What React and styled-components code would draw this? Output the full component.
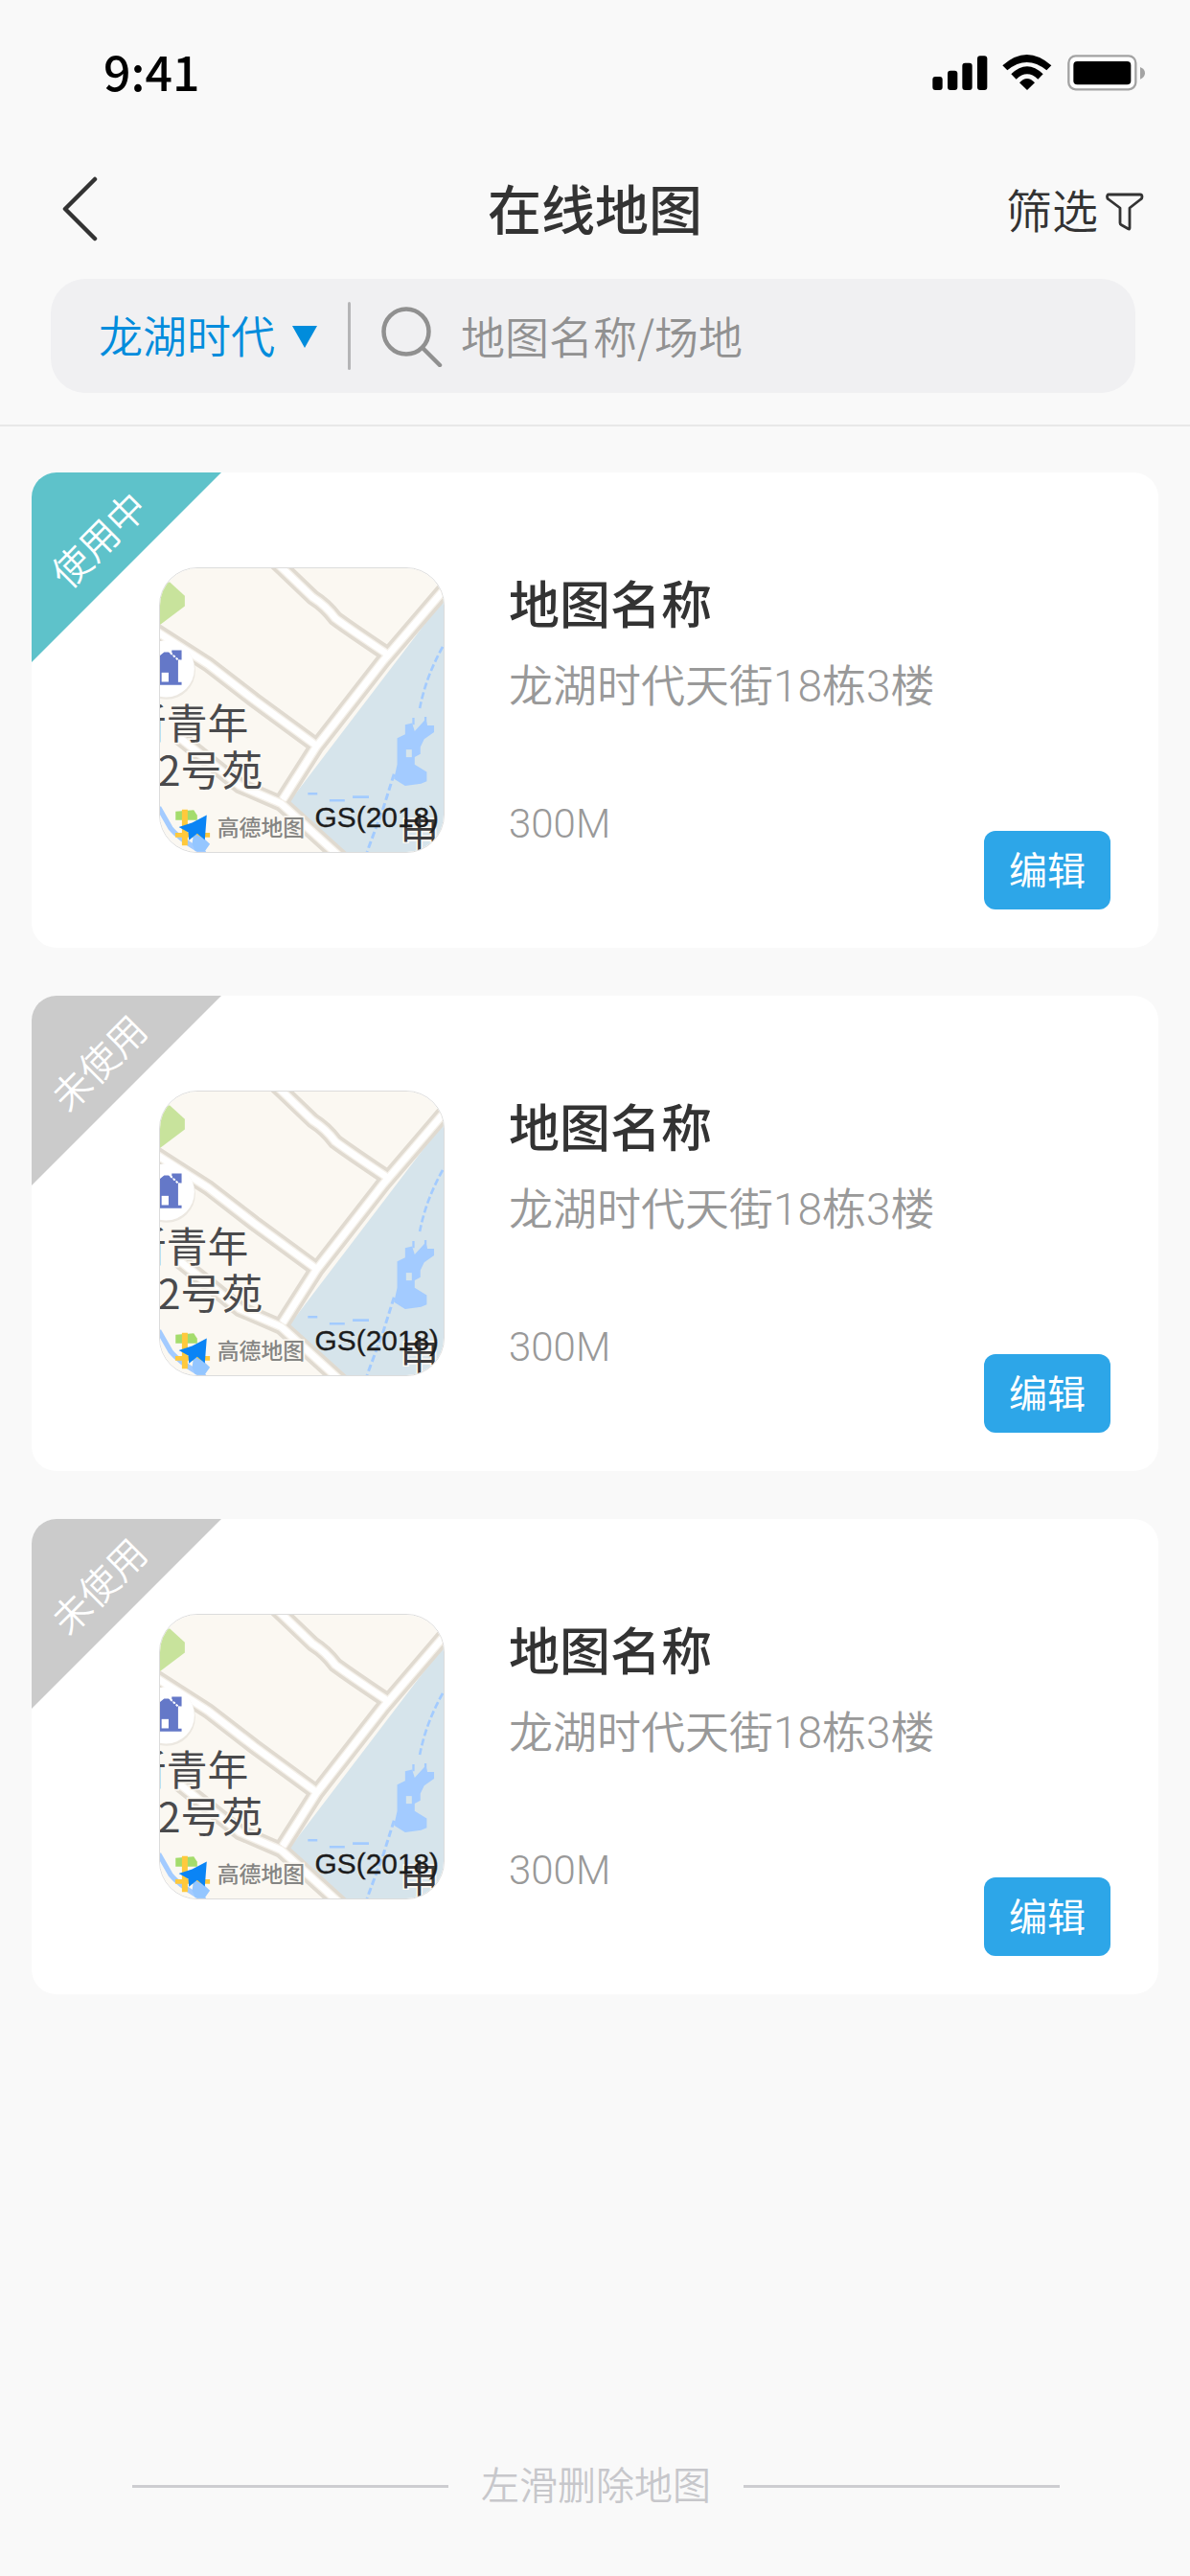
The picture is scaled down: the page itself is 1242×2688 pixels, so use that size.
import React, { useState } from "react";
import styled, { createGlobalStyle, css } from "styled-components";

const maps = [
  { id: 1, name: "地图名称", place: "龙湖时代天街18栋3楼", size: "300M", inUse: true },
  { id: 2, name: "地图名称", place: "龙湖时代天街18栋3楼", size: "300M", inUse: false },
  { id: 3, name: "地图名称", place: "龙湖时代天街18栋3楼", size: "300M", inUse: false },
];

const StatusIcons = () => (
  <svg width="224" height="40" viewBox="36 48 672 120" aria-hidden="true">
    <rect x="40" y="120" width="31" height="42" rx="9" />
    <rect x="87" y="101" width="31" height="61" rx="9" />
    <rect x="133" y="77" width="31" height="85" rx="9" />
    <rect x="180" y="55" width="31" height="107" rx="9" />
    <path d="M259 85Q335 17 412 85L397 100Q335 50 274 100Z" />
    <path d="M286 112Q336 64 386 112L370 128Q336 96 302 128Z" />
    <path d="M312 139Q336 113 360 139L336 162Z" />
    <rect x="466" y="55" width="210" height="105" rx="22" fill="#fff" stroke="#a3a3a3" strokeWidth="7" />
    <rect x="481" y="72" width="180" height="73" rx="12" />
    <path d="M690 90Q705 96 705 109Q705 122 690 128Z" fill="#a3a3a3" />
  </svg>
);

const BackIcon = () => (
  <svg width="38" height="68" viewBox="0 0 38 68" aria-hidden="true">
    <path d="M35 3L4 34L35 65" fill="none" stroke="#333" strokeWidth="4.5" strokeLinecap="round" strokeLinejoin="round" />
  </svg>
);

const FilterIcon = () => (
  <svg width="40" height="40" viewBox="0 0 40 40" aria-hidden="true">
    <path
      d="M3 2H36Q38 2 38 4.500Q38 6 36.500 7L25 16V37Q25 38.500 23.500 37.800L16 33.500Q15 33 15 31.500V16L3 7Q1.500 6 1.500 4.500Q1.500 2 3 2Z"
      fill="none"
      stroke="#333"
      strokeWidth="2.800"
      strokeLinejoin="round"
    />
  </svg>
);

const CaretIcon = () => (
  <svg width="26" height="24" viewBox="0 0 26 24" aria-hidden="true">
    <path d="M0 1H26L13 24Z" fill="#008cdc" />
  </svg>
);

const SearchIcon = () => (
  <svg width="65" height="64" viewBox="0 0 65 64" aria-hidden="true">
    <g fill="none" stroke="#909090" strokeWidth="4.500" strokeLinecap="round">
      <circle cx="26" cy="27" r="23.500" />
      <path d="M43 44L61 62" />
    </g>
  </svg>
);

const roads = [
  "M415 20L530 130Q570 155 600 195Q640 225 770 312",
  "M20 225L200 340L345 452L540 595",
  "M110 570L300 722L430 778L620 950",
  "M960 85L750 330L540 600L435 765",
];

const MapPreview = () => (
  <svg viewBox="49 38 892 892" role="img" aria-label="地图预览">
    <rect x="49" y="38" width="892" height="892" fill="#fbf8f2" />
    <path d="M941 135L450 780L600 930H941Z" fill="#d6e4eb" />
    <path d="M49 82H80L127 125V157L49 216Z" fill="#c8e39c" />
    <g fill="none" stroke="#e0dad0" strokeWidth="50">
      {roads.map((d) => (
        <path key={d} d={d} />
      ))}
    </g>
    <g fill="none" stroke="#f5f1ea" strokeWidth="28">
      {roads.map((d) => (
        <path key={d} d={d} />
      ))}
    </g>
    <g fill="none" stroke="#fff" strokeWidth="20">
      {roads.map((d) => (
        <path key={d} d={d} />
      ))}
    </g>

    {/* lake and streams */}
    <path d="M820 530L842 525L850 550L885 512L890 532H911V553L880 575L868 600V622L850 632V655L888 678V708L870 715L820 722L785 700L795 655V572L820 560Z" fill="#a3cbff" />
    <rect x="823" y="608" width="18" height="24" fill="#d6e4eb" />
    <g fill="none" stroke="#a3cbff">
      <path d="M938 285Q885 380 866 478" strokeWidth="8" strokeDasharray="22 9" />
      <path d="M846 508V530M884 505V530" strokeWidth="7" />
      <path d="M785 685L752 790L700 930" strokeWidth="9" strokeDasharray="22 10" />
      <path d="M514 747H544M582 768H630M655 757H706" strokeWidth="8" />
      <path d="M45 790L82 855Q110 890 190 935" strokeWidth="16" />
    </g>

    {/* house pin */}
    <circle cx="70" cy="360" r="90" fill="#ece8e1" />
    <circle cx="68" cy="354" r="89" fill="#fff" />
    <path d="M49 312L62 302H76L106 325V396H117V405H49Z" fill="#6478c8" />
    <path d="M86 296H117V326H108L86 308Z" fill="#6478c8" />
    <path d="M82 304L117 336" stroke="#fff" strokeWidth="6" strokeDasharray="7 5" />
    <rect x="54" y="366" width="22" height="29" fill="#fff" />

    <MapLabel x="-60" y="574" fontSize="129">新青年</MapLabel>
    <MapLabel x="42" y="723" fontSize="129">2号苑</MapLabel>

    {/* provider mark */}
    <path d="M98 803L155 798L166 815V830H98Z" fill="#a4dc6c" />
    <path d="M118 797H136V910H118ZM97 870H206V884H97Z" fill="#ffc93c" />
    <path d="M155 870L190 890L206 905L190 928H160L150 905Z" fill="#94c6ff" />
    <path d="M196 814L190 892L166 872L140 893L138 868L108 852L150 838Z" fill="#0a84f5" />
    <MapLabel x="229" y="880" fontSize="69" $tone="#858583" $bold>高德地图</MapLabel>
    <MapLabel x="804" y="914" fontSize="122" $tone="#3c3c3e">申</MapLabel>
    <ApprovalLabel x="536" y="851" fontSize="90">GS(2018)</ApprovalLabel>
  </svg>
);

const MapCard = ({ item }) => (
  <Card>
    <Corner $active={item.inUse}>
      <CornerText>{item.inUse ? "使用中" : "未使用"}</CornerText>
    </Corner>
    <Thumb>
      <MapPreview />
    </Thumb>
    <Info>
      <Name>{item.name}</Name>
      <Place>{item.place}</Place>
      <Size>{item.size}</Size>
    </Info>
    <EditButton type="button">编辑</EditButton>
  </Card>
);

const App = () => {
  const [keyword, setKeyword] = useState("");
  return (
    <Page>
      <GlobalStyle />
      <Header>
        <StatusBar>
          <Time>9:41</Time>
          <StatusIcons />
        </StatusBar>
        <NavBar>
          <BackButton type="button" aria-label="返回">
            <BackIcon />
          </BackButton>
          <Title>在线地图</Title>
          <FilterButton type="button">
            筛选
            <FilterIcon />
          </FilterButton>
        </NavBar>
        <SearchBar>
          <Venue>
            <VenueSelect aria-label="场地">
              <option>龙湖时代</option>
            </VenueSelect>
            <CaretIcon />
          </Venue>
          <Divider />
          <SearchField>
            <SearchIcon />
            <SearchInput
              type="text"
              aria-label="搜索"
              placeholder="地图名称/场地"
              value={keyword}
              onChange={(e) => setKeyword(e.target.value)}
            />
          </SearchField>
        </SearchBar>
      </Header>
      <List>
        {maps.map((item) => (
          <MapCard key={item.id} item={item} />
        ))}
      </List>
      <Hint>
        <HintLine />
        左滑删除地图
        <HintLine />
      </Hint>
    </Page>
  );
};
export default App;

const GlobalStyle = createGlobalStyle`
  * {
    box-sizing: border-box;
  }
  body {
    margin: 0;
    background-color: #f9f9f9;
    font-family: Inter, "Noto Sans CJK SC", sans-serif;
    font-weight: 350;
  }
  button, input, select {
    font-family: inherit;
    font-weight: inherit;
    border: none;
    background: none;
    padding: 0;
    margin: 0;
  }
  svg {
    display: block;
    flex-shrink: 0;
  }
`;

const detailText = css`
  font-family: Roboto, "Noto Sans CJK SC", sans-serif;
  color: #999;
`;

const Page = styled.div`
  display: flex;
  flex-direction: column;
  min-height: 100vh;
`;

const Header = styled.header`
  padding-bottom: 33px;
  border-bottom: 2px solid #e8e8e8;
`;

const StatusBar = styled.div`
  display: flex;
  justify-content: space-between;
  align-items: center;
  padding: 44px 46px 0 108px;
`;

const Time = styled.span`
  padding-bottom: 6px;
  font-family: "Noto Sans CJK SC", sans-serif;
  font-size: 50px;
  line-height: 58px;
  font-weight: 500;
  color: #000;
`;

const NavBar = styled.nav`
  display: grid;
  grid-template-columns: 1fr auto 1fr;
  align-items: center;
  padding: 68px 48px 31px;
`;

const BackButton = styled.button`
  justify-self: start;
  padding-left: 16px;
`;

const Title = styled.h1`
  margin: 0;
  padding-top: 4px;
  font-size: 56px;
  line-height: 80px;
  font-weight: 500;
  color: #333;
`;

const FilterButton = styled.button`
  display: flex;
  align-items: center;
  justify-self: end;
  gap: 8px;
  padding-top: 6px;
  font-size: 48px;
  line-height: 72px;
  color: #333;
`;

const SearchBar = styled.div`
  display: flex;
  align-items: center;
  gap: 32px;
  margin: 0 57px 0 53px;
  padding: 24px 50px;
  border-radius: 36px;
  background-color: #f0f0f2;
`;

const Venue = styled.div`
  display: flex;
  align-items: center;
  gap: 18px;
`;

const VenueSelect = styled.select`
  appearance: none;
  font-size: 46px;
  line-height: 64px;
  color: #008cdc;
`;

const Divider = styled.span`
  flex-shrink: 0;
  width: 3px;
  height: 71px;
  border-radius: 2px;
  background-color: #b4b4b6;
`;

const SearchField = styled.div`
  display: flex;
  align-items: center;
  flex: 1;
  gap: 18px;
  min-width: 0;
`;

const SearchInput = styled.input`
  flex: 1;
  min-width: 0;
  height: 68px;
  padding-bottom: 4px;
  font-family: "Noto Sans CJK SC", sans-serif;
  font-size: 46px;
  color: #333;
  outline: none;
  &::placeholder {
    color: #919191;
    opacity: 1;
  }
`;

const List = styled.main`
  display: flex;
  flex-direction: column;
  gap: 50px;
  padding: 48px 33px;
`;

const Card = styled.article`
  position: relative;
  display: flex;
  align-items: flex-start;
  padding: 0 50px 0 133px;
  border-radius: 26px;
  background-color: #fff;
  overflow: hidden;
`;

/* lies over the top left corner of the card */
const Corner = styled.div`
  position: absolute;
  top: 0;
  left: 0;
  display: flex;
  justify-content: center;
  align-items: center;
  width: 198px;
  height: 198px;
  padding: 0 56px 56px 0;
  clip-path: polygon(0 0, 100% 0, 0 100%);
  background-color: ${({ $active }) => ($active ? "#5ec2ca" : "#cbcbcb")};
`;

const CornerText = styled.span`
  flex-shrink: 0;
  font-size: 40px;
  line-height: 56px;
  color: #fff;
  transform: rotate(-45deg);
`;

const Thumb = styled.div`
  flex-shrink: 0;
  width: 298px;
  height: 298px;
  margin: 99px 67px 99px 0;
  border: 1px solid #dcdcdc;
  border-radius: 40px;
  overflow: hidden;
`;

const MapLabel = styled.text`
  font-family: "Noto Sans CJK SC", sans-serif;
  font-weight: ${({ $bold }) => ($bold ? 500 : 400)};
  fill: ${({ $tone }) => $tone || "#4a4a4c"};
  stroke: #fbf8f2;
  stroke-width: 10px;
  paint-order: stroke;
`;

const ApprovalLabel = styled.text`
  font-family: "Liberation Sans", sans-serif;
  font-weight: 400;
  fill: #1c1c1c;
  stroke: #1c1c1c;
  stroke-width: 1px;
`;

const Info = styled.div`
  flex: 1;
  padding-top: 103px;
`;

const Name = styled.h2`
  margin: 0 0 16px;
  font-size: 53px;
  line-height: 72px;
  font-weight: 500;
  color: #333;
`;

const Place = styled.p`
  ${detailText}
  margin: 0 0 84px;
  font-size: 46px;
  line-height: 64px;
`;

const Size = styled.p`
  ${detailText}
  margin: 0;
  font-size: 42px;
  line-height: 56px;
`;

const EditButton = styled.button`
  align-self: flex-end;
  margin-bottom: 40px;
  padding: 13px 26px 11px;
  border-radius: 12px;
  background-color: #2da6e8;
  font-size: 40px;
  line-height: 58px;
  font-weight: 400;
  color: #fff;
`;

const Hint = styled.footer`
  display: flex;
  justify-content: center;
  align-items: center;
  gap: 34px;
  margin-top: auto;
  padding: 0 136px 64px 138px;
  font-size: 40px;
  line-height: 60px;
  color: #c7c7cb;
`;

const HintLine = styled.span`
  flex: 1;
  height: 3px;
  background-color: #cdcdd1;
`;
